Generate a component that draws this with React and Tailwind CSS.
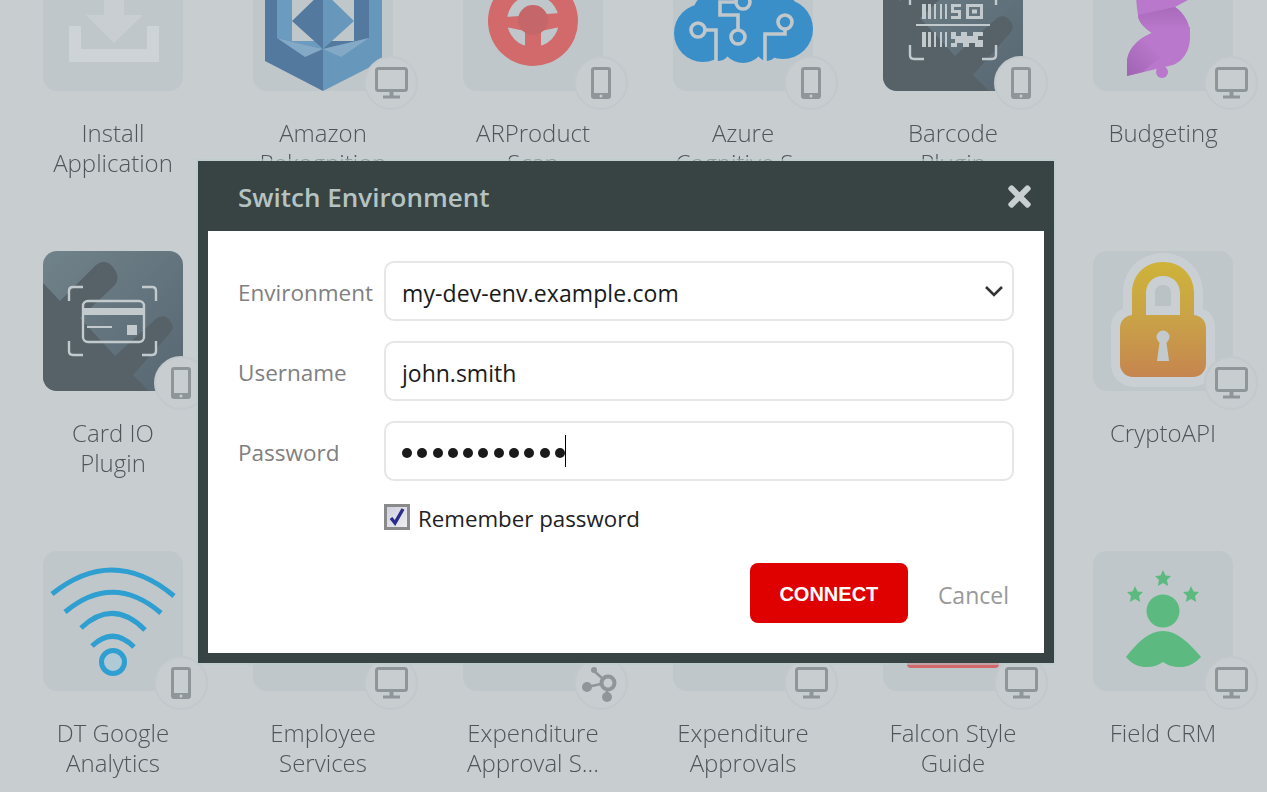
import React from 'react';
import { FaTimes } from 'react-icons/fa';

const TILE = '#bfc7ca';

const CornerBrackets = ({ x1, y1, x2, y2 }) => (
  <path
    d={`M${x1} ${y1 + 14}V${y1 + 4}q0-4 4-4H${x1 + 14} M${x2 - 14} ${y1}H${x2 - 4}q4 0 4 4V${y1 + 14} M${x1} ${y2 - 14}V${y2 - 4}q0 4 4 4H${x1 + 14} M${x2 - 14} ${y2}H${x2 - 4}q4 0 4-4V${y2 - 14}`}
    fill="none"
    stroke="#c3cacd"
    strokeWidth="2.4"
  />
);

const Chevrons = () => (
  <path
    d="M0 32L17 50L53 14Q62 7 70 16Q78 26 72 34L37 67L72 105L114 67Q122 62 128 71Q132 77 127 82L90 124L106 140H14Q0 140 0 126Z"
    fill="#566168"
  />
);

const InstallIcon = () => (
  <svg viewBox="0 0 140 140" className="absolute inset-0">
    <path d="M26 75H38V98H104V75H116V111H26Z" fill="#cdd3d6" />
    <path d="M61 10H81V64H100L71 92L43 64H61Z" fill="#c8ced1" />
  </svg>
);

const AmazonIcon = () => (
  <svg viewBox="0 0 140 140" className="absolute inset-0">
    <path d="M12 0H70V140L12 110Z" fill="#53799f" />
    <path d="M70 0H129V110L70 140Z" fill="#6797bb" />
    <path d="M24 30H70V98L24 87Z" fill="#6c9bc0" />
    <path d="M116 30H70V98L116 87Z" fill="#53799f" />
    <path d="M39 40H101V90H39Z" fill={TILE} />
    <path d="M70 40L39 70L70 98Z" fill="#53799f" />
    <path d="M70 40L101 70L70 98Z" fill="#6797bb" />
    <path d="M24 87L70 98L52 106Z" fill="#84a9c6" />
    <path d="M116 87L70 98L88 106Z" fill="#84a9c6" />
  </svg>
);

const WheelIcon = () => (
  <svg viewBox="0 0 140 140" className="absolute inset-0">
    <circle cx="70" cy="70" r="45" fill="#d2696b" />
    <circle cx="70" cy="70" r="26" fill={TILE} />
    <path d="M43 66L97 62L97 76L78 80V98H62V80L43 76Z" fill="#d2696b" />
    <circle cx="70" cy="69" r="15" fill="#c4666a" />
  </svg>
);

const CloudIcon = () => (
  <svg viewBox="0 0 140 140" className="absolute inset-0">
    <g fill="#3b8fc9">
      <circle cx="70" cy="52" r="32" />
      <circle cx="30" cy="82" r="29" />
      <circle cx="110" cy="78" r="30" />
      <circle cx="70" cy="90" r="22" />
      <circle cx="40" cy="62" r="20" />
      <circle cx="100" cy="56" r="22" />
      <circle cx="46" cy="100" r="10" />
      <circle cx="94" cy="100" r="10" />
    </g>
    <g fill="none" stroke="#c0c8cb" strokeWidth="3.600">
      <circle cx="25" cy="79" r="7" />
      <circle cx="65" cy="86" r="7" />
      <circle cx="112" cy="71" r="7" />
      <circle cx="70" cy="51" r="7" />
      <path d="M32 79H43V112M63 51H47V64H65V79M112 78V83H92V112" />
    </g>
  </svg>
);

const BarcodeIcon = () => (
  <svg viewBox="0 0 140 140" className="absolute inset-0">
    <Chevrons />
    <g fill="#c3cacd">
      <rect x="33" y="73" width="74" height="2" />
      <rect x="39" y="53" width="4" height="15" />
      <rect x="45" y="53" width="3" height="15" />
      <rect x="51" y="53" width="2" height="15" />
      <rect x="57" y="53" width="2" height="15" />
      <rect x="62" y="53" width="2" height="15" />
      <path d="M68 53H78V56H71V59H78V68H68V65H75V62H68Z" />
      <path d="M83 53H100V68H83ZM86 56V65H97V56Z" fillRule="evenodd" />
      <rect x="89" y="58.500" width="5" height="4" />
      <rect x="39" y="81" width="4" height="15" />
      <rect x="45" y="81" width="3" height="15" />
      <rect x="51" y="81" width="2" height="15" />
      <rect x="57" y="81" width="2" height="15" />
      <rect x="62" y="81" width="2" height="15" />
      <path d="M68 81H73V85H78V81H84V85H90V81H100V85H95V89H100V96H92V92H86V96H80V92H74V96H68V92H72V88H68Z" />
    </g>
    <CornerBrackets x1={27} y1={40} x2={113} y2={108} />
  </svg>
);

const RibbonIcon = () => (
  <svg viewBox="0 0 140 140" className="absolute inset-0">
    <defs>
      <linearGradient id="ribbonFold" x1="0" y1="56" x2="0" y2="78" gradientUnits="userSpaceOnUse">
        <stop offset="0" stopColor="#a96abb" />
        <stop offset="1" stopColor="#b978cb" />
      </linearGradient>
      <linearGradient id="ribbonTail" x1="34" y1="125" x2="62" y2="98" gradientUnits="userSpaceOnUse">
        <stop offset="0" stopColor="#9f63b1" />
        <stop offset="1" stopColor="#b978cb" />
      </linearGradient>
    </defs>
    <circle cx="69" cy="121" r="6" fill="#b978cb" />
    <path
      d="M43 40H95V49L82 56C92 62 97 74 97 86C97 100 90 110 80 114L34 125V112C34 98 46 87 59 82C50 76 45 70 45 64C44 58 43 50 43 40Z"
      fill="#b978cb"
    />
    <path d="M45 64L82 56C90 62 95 70 96 76L59 82C50 76 45 70 45 64Z" fill="url(#ribbonFold)" />
    <path d="M34 125V112C34 98 46 87 59 82L97 76C97 80 97 84 96 90C80 100 60 110 50 121Z" fill="url(#ribbonTail)" />
  </svg>
);

const CardIcon = () => (
  <svg viewBox="0 0 140 140" className="absolute inset-0">
    <Chevrons />
    <CornerBrackets x1={26} y1={36} x2={113} y2={104} />
    <g fill="none" stroke="#c3cacd" strokeWidth="2.4">
      <rect x="40" y="50" width="61" height="41" rx="5" />
    </g>
    <rect x="40" y="57" width="61" height="7" fill="#c3cacd" />
    <rect x="44" y="75" width="25" height="2" fill="#c3cacd" />
    <rect x="84" y="74" width="10" height="10" fill="#c3cacd" />
  </svg>
);

const LockIcon = () => (
  <svg viewBox="0 0 140 140" className="absolute inset-0">
    <defs>
      <linearGradient id="lockFill" x1="0" y1="11" x2="0" y2="126" gradientUnits="userSpaceOnUse">
        <stop offset="0" stopColor="#ceb339" />
        <stop offset="0.5" stopColor="#c9a247" />
        <stop offset="1" stopColor="#c6854f" />
      </linearGradient>
    </defs>
    <path
      d="M30 58V42C30 18 48 2 70 2C92 2 110 18 110 42V58C117 60 122 67 122 76V112C122 127 112 136 98 136H42C28 136 18 127 18 112V76C18 67 23 60 30 58Z"
      fill="#c9cfd2"
    />
    <path
      d="M39 66V42C39 24 52 11 70 11C88 11 101 24 101 42V66H87V42C87 32 80 25 70 25C60 25 53 32 53 42V66Z"
      fill="url(#lockFill)"
    />
    <rect x="27" y="64" width="86" height="62" rx="13" fill="url(#lockFill)" />
    <path d="M62 55V42C62 37 65 34 70 34C75 34 78 37 78 42V55Z" fill="#bac2c5" />
    <circle cx="70" cy="86" r="6.500" fill="#c3cacd" />
    <path d="M67 88H73L76 110H64Z" fill="#c3cacd" />
  </svg>
);

const WifiIcon = () => (
  <svg viewBox="0 0 140 140" className="absolute inset-0">
    <g fill="none" stroke="#2e9fd0" strokeWidth="5">
      <path d="M9 43Q70 -6 131 45" />
      <path d="M22 61Q70 21 118 62" />
      <path d="M38 77Q70 47 102 79" />
      <path d="M49 95Q70 75 91 96" />
      <circle cx="70" cy="111" r="11.500" fill="#afc9d7" />
    </g>
  </svg>
);

const BarIcon = () => (
  <svg viewBox="0 0 140 140" className="absolute inset-0">
    <path d="M24 100H116V113Q116 117 112 117H28Q24 117 24 113Z" fill="#d0686c" />
  </svg>
);

const PersonIcon = () => (
  <svg viewBox="0 0 140 140" className="absolute inset-0">
    <g fill="#5cba80">
      <circle cx="70" cy="60" r="16.500" />
      <path d="M33 106C44 92 56 80 70 80C84 80 96 92 108 106C100 114 94 116 87 116C80 116 74 114 70 111C66 114 60 116 54 116C46 116 40 114 33 106Z" />
      <path d="M70 19L72.500 24.500L78 25L74 29L75.200 35L70 32L64.800 35L66 29L62 25L67.500 24.500Z" />
      <path d="M42 35L44.500 40.500L50 41L46 45L47.200 51L42 48L36.800 51L38 45L34 41L39.500 40.500Z" />
      <path d="M98 35L100.500 40.500L106 41L102 45L103.200 51L98 48L92.800 51L94 45L90 41L95.500 40.500Z" />
    </g>
  </svg>
);

const PhoneGlyph = () => (
  <svg width="20" height="32" viewBox="0 0 20 32">
    <path
      d="M3 0H17Q20 0 20 3V29Q20 32 17 32H3Q0 32 0 29V3Q0 0 3 0ZM3 3V26H17V3Z"
      fill="#8f9699"
      fillRule="evenodd"
    />
    <circle cx="10" cy="29" r="1.500" fill="#c8cdd0" />
  </svg>
);

const MonitorGlyph = () => (
  <svg width="33" height="32" viewBox="0 0 33 32">
    <rect x="1.500" y="1.500" width="30" height="22" rx="2" fill="none" stroke="#8f9699" strokeWidth="3" />
    <path d="M14.500 24H18.500V28.500H25V31.500H8V28.500H14.500Z" fill="#8f9699" />
  </svg>
);

const HubGlyph = () => (
  <svg width="40" height="40" viewBox="0 0 40 40">
    <g stroke="#8f9699" strokeWidth="2.500" fill="#8f9699">
      <path d="M13 8L21 15M6 24L20 21M26 26V32" fill="none" />
      <circle cx="13" cy="7" r="3" strokeWidth="0" />
      <circle cx="6" cy="24" r="5" strokeWidth="0" />
      <circle cx="26" cy="34" r="5" strokeWidth="0" />
      <circle cx="27" cy="20" r="6.500" fill="#c8cdd0" strokeWidth="4" />
    </g>
  </svg>
);

const badges = { phone: PhoneGlyph, desktop: MonitorGlyph, hub: HubGlyph };

const apps = [
  { lines: ['Install', 'Application'], Icon: InstallIcon },
  { lines: ['Amazon', 'Rekognition'], Icon: AmazonIcon, badge: 'desktop' },
  { lines: ['ARProduct', 'Scan'], Icon: WheelIcon, badge: 'phone' },
  { lines: ['Azure', 'Cognitive S...'], Icon: CloudIcon, badge: 'phone' },
  { lines: ['Barcode', 'Plugin'], Icon: BarcodeIcon, badge: 'phone', dark: true },
  { lines: ['Budgeting'], Icon: RibbonIcon, badge: 'desktop' },
  { lines: ['Card IO', 'Plugin'], Icon: CardIcon, badge: 'phone', dark: true },
  { lines: [] },
  { lines: [] },
  { lines: [] },
  { lines: [] },
  { lines: ['CryptoAPI'], Icon: LockIcon, badge: 'desktop' },
  { lines: ['DT Google', 'Analytics'], Icon: WifiIcon, badge: 'phone' },
  { lines: ['Employee', 'Services'], badge: 'desktop' },
  { lines: ['Expenditure', 'Approval S...'], badge: 'hub' },
  { lines: ['Expenditure', 'Approvals'], badge: 'desktop' },
  { lines: ['Falcon Style', 'Guide'], Icon: BarIcon, badge: 'desktop' },
  { lines: ['Field CRM'], Icon: PersonIcon, badge: 'desktop' },
];

const AppTile = ({ lines, Icon, badge, dark }) => {
  const Badge = badges[badge];
  return (
    <div className="flex flex-col items-center h-[300px]">
      <div
        className={`relative w-[140px] h-[140px] rounded-[14px] ${
          dark ? 'bg-gradient-to-br from-[#70828a] to-[#586772]' : 'bg-[#bfc7ca]'
        }`}
      >
        {Icon && (
          <div className="absolute inset-0 rounded-[14px] overflow-hidden">
            <Icon />
          </div>
        )}
        {Badge && (
          <div className="absolute left-[111px] top-[105px] w-[54px] h-[54px] rounded-full bg-[#c8cdd0] border-2 border-[#c2c8cb] flex items-center justify-center">
            <Badge />
          </div>
        )}
      </div>
      <div className="mt-[27px] w-[190px] text-center text-[24px] font-light leading-[30px] text-[#4f5558]">
        {lines.map((line) => (
          <div key={line}>{line}</div>
        ))}
      </div>
    </div>
  );
};

const Field = ({ label, children }) => (
  <div className="flex items-center mb-[20px]">
    <label className="w-[146px] shrink-0 pt-[4px] text-[22.500px] text-[#808080]">{label}</label>
    <div className="flex-1 h-[60px] flex items-center px-[16px] rounded-[10px] border-2 border-[#e6e6e6] text-[23px] text-[#1a1a1a]">
      {children}
    </div>
  </div>
);

const App = () => {
  return (
    <div
      className="relative h-screen overflow-hidden bg-[#c8cdd0]"
      style={{ fontFamily: '"Open Sans", "Noto Sans", sans-serif' }}
    >
      <div className="grid grid-cols-[repeat(6,210px)] ml-2 -mt-[49px] blur-[0.5px]">
        {apps.map((app, i) => (
          <AppTile key={i} {...app} />
        ))}
      </div>

      <div className="absolute left-[198px] top-[161px] w-[856px] bg-[#384343] px-[10px] pb-[10px] shadow-[0_0_0_2px_rgba(185,205,205,0.6)] text-[22px]">
        <div className="h-[70px] flex items-center justify-between pl-[30px] pr-[8px]">
          <h2 className="text-[26px] font-semibold text-[#b5c3c2] mt-[3px]">Switch Environment</h2>
          <FaTimes size={33} className="text-[#c8cfd1]" />
        </div>
        <div className="bg-white px-[30px] pt-[30px] pb-[30px]">
          <Field label="Environment">
            <span className="flex-1 pt-[4px] tracking-[0.1px]">my-dev-env.example.com</span>
            <svg width="20" height="14" viewBox="0 0 20 14" className="-mr-[8px]">
              <path d="M2 3L10 11L18 3" fill="none" stroke="#333" strokeWidth="2.600" />
            </svg>
          </Field>
          <Field label="Username">
            <span className="pt-[4px]">john.smith</span>
          </Field>
          <Field label="Password">
            <div className="flex items-center gap-[5.300px] pt-[4px]">
              {Array.from({ length: 11 }).map((_, i) => (
                <span key={i} className="w-[10px] h-[10px] rounded-full bg-[#1a1a1a]" />
              ))}
            </div>
            <span className="w-px h-[32px] bg-black" />
          </Field>
          <div className="flex items-center pl-[146px] mt-[23px] h-[26px]">
            <span className="w-[26px] h-[26px] border-[3px] border-[#8a8a8a] bg-gradient-to-br from-[#cfd0dc] to-[#eeeef2] flex items-center justify-center">
              <svg width="18" height="18" viewBox="0 0 18 18">
                <path d="M3 10L7 15L15 1" fill="none" stroke="#2c2c8c" strokeWidth="3.400" />
              </svg>
            </span>
            <span className="ml-[8px] pt-[4px] text-[22.300px] text-[#222]">Remember password</span>
          </div>
          <div className="flex items-center justify-end mt-[33px] pr-[5px]">
            <button
              className="w-[158px] h-[60px] pt-[2px] rounded-[8px] bg-[#df0000] text-white font-bold text-[20px]"
              style={{ fontFamily: '"Liberation Sans", sans-serif' }}
            >
              CONNECT
            </button>
            <span className="ml-[30px] pt-[4px] text-[23px] text-[#999]">Cancel</span>
          </div>
        </div>
      </div>
    </div>
  );
};

export default App;
